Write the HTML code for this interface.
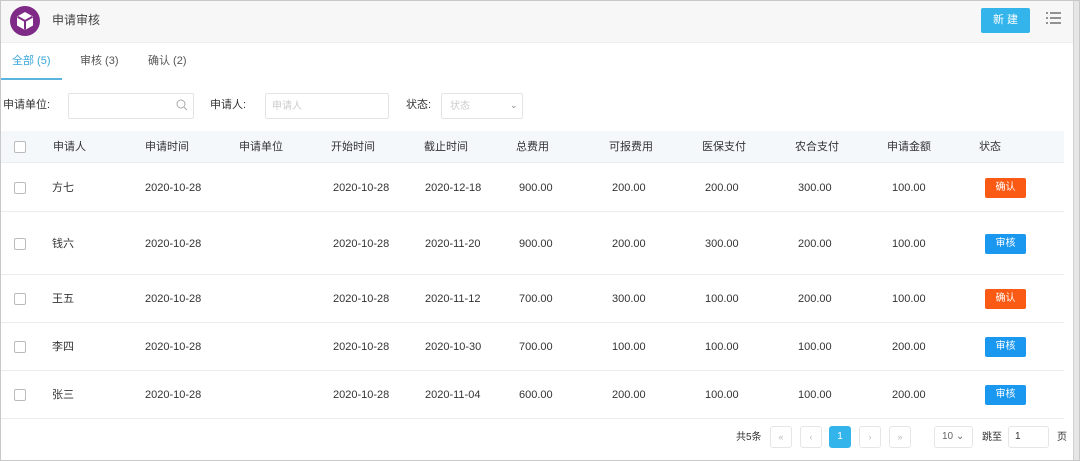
<!DOCTYPE html><html><head><meta charset="utf-8"><style>
*{box-sizing:border-box;margin:0;padding:0}
body{width:1080px;height:461px;background:#fff;font-family:"Liberation Sans","Noto Sans CJK SC",sans-serif;font-size:11px;color:#333;position:relative;overflow:hidden}
.a{position:absolute;white-space:nowrap;line-height:14px;height:14px}
.frame{position:absolute;left:0;top:0;width:1080px;height:461px;border:1px solid #c8c8c8;pointer-events:none}
.hd{position:absolute;left:0;top:0;width:1073px;height:43px;background:#f7f7f7;border-bottom:1px solid #eee}
.sb{position:absolute;left:1073px;top:0;width:7px;height:461px;background:#e6e6e6;border-left:1px solid #d0d0d0}
.inp{position:absolute;height:26px;border:1px solid #e4e4e4;border-radius:2px;background:#fff}
.th{position:absolute;left:0;top:131px;width:1064px;height:32px;background:#f4f8fb;border-bottom:1px solid #e8eef2}
.row{position:absolute;left:0;width:1064px;border-bottom:1px solid #ececec}
.cb{position:absolute;left:14px;width:12px;height:12px;border:1px solid #bbb;border-radius:2px;background:#fff}
.btn{position:absolute;left:985px;width:41px;height:20px;border-radius:2px;color:#fff;font-size:10px;text-align:center;line-height:20px}
.pg{position:absolute;top:426px;width:22px;height:22px;border:1px solid #e6e6e6;border-radius:3px;color:#bbb;font-size:9px;text-align:center;line-height:20px}
</style></head><body>
<div class="hd"></div>
<svg class="a" style="left:10px;top:6px;height:30px" width="30" height="30" viewBox="0 0 30 30"><circle cx="15" cy="15" r="15" fill="#7e2a86"/><path d="M15 6 L23 10.5 L23 19.5 L15 24 L7 19.5 L7 10.5 Z" fill="#fff"/><path d="M7.5 10.8 L15 15 L22.5 10.8 M15 15 L15 23.5" stroke="#7e2a86" stroke-width="2" fill="none"/></svg>
<div class="a" style="left:52px;top:13px;font-size:12px;color:#444">申请审核</div>
<div class="a" style="left:981px;top:8px;width:49px;height:25px;background:#33b5ec;border-radius:2px;color:#fff;font-size:11px;text-align:center;line-height:25px">新 建</div>
<svg class="a" style="left:1046px;top:12px;height:12px" width="15" height="12" viewBox="0 0 15 12"><g stroke="#555" stroke-width="1.3"><path d="M0 1h2M4 1h11M0 6h2M4 6h11M0 11h2M4 11h11"/></g></svg>
<div class="a" style="left:12px;top:54px;color:#3aa6d9">全部 (5)</div>
<div class="a" style="left:0;top:78px;width:62px;height:2px;background:#5ab4dd"></div>
<div class="a" style="left:80px;top:54px;color:#555">审核 (3)</div>
<div class="a" style="left:148px;top:54px;color:#555">确认 (2)</div>
<div class="a" style="left:3px;top:98px">申请单位:</div>
<div class="inp" style="left:68px;top:93px;width:126px"></div>
<svg class="a" style="left:176px;top:99px;height:12px" width="12" height="12" viewBox="0 0 12 12"><circle cx="5" cy="5" r="4" stroke="#aaa" fill="none"/><path d="M8 8l3 3" stroke="#aaa"/></svg>
<div class="a" style="left:210px;top:98px">申请人:</div>
<div class="inp" style="left:265px;top:93px;width:124px"></div>
<div class="a" style="left:272px;top:100px;color:#ccc;font-size:10px">申请人</div>
<div class="a" style="left:406px;top:98px">状态:</div>
<div class="inp" style="left:441px;top:93px;width:82px"></div>
<div class="a" style="left:450px;top:100px;color:#ccc;font-size:10px">状态</div>
<div class="a" style="left:510px;top:98px;color:#888;font-size:9px">⌄</div>
<div class="th"></div>
<div class="cb" style="top:141px"></div>
<div class="a" style="top:140px;left:53px">申请人</div><div class="a" style="top:140px;left:145px">申请时间</div><div class="a" style="top:140px;left:239px">申请单位</div><div class="a" style="top:140px;left:331px">开始时间</div><div class="a" style="top:140px;left:424px">截止时间</div><div class="a" style="top:140px;left:516px">总费用</div><div class="a" style="top:140px;left:609px">可报费用</div><div class="a" style="top:140px;left:702px">医保支付</div><div class="a" style="top:140px;left:795px">农合支付</div><div class="a" style="top:140px;left:887px">申请金额</div><div class="a" style="top:140px;left:979px">状态</div>
<div class="row" style="top:163px;height:49px"></div>
<div class="row" style="top:212px;height:63px"></div>
<div class="row" style="top:275px;height:48px"></div>
<div class="row" style="top:323px;height:48px"></div>
<div class="row" style="top:371px;height:48px"></div>
<div id="rows"></div>
<script>
var d=[[188,"方七","2020-12-18","900.00","200.00","200.00","300.00","100.00",0],
[244,"钱六","2020-11-20","900.00","200.00","300.00","200.00","100.00",1],
[299,"王五","2020-11-12","700.00","300.00","100.00","200.00","100.00",0],
[347,"李四","2020-10-30","700.00","100.00","100.00","100.00","200.00",1],
[395,"张三","2020-11-04","600.00","200.00","100.00","100.00","200.00",1]];
var h="";d.forEach(function(r){var t=r[0]-7;
h+='<div class="cb" style="top:'+(r[0]-6)+'px"></div>';
h+='<div class="a" style="top:'+t+'px;left:52px">'+r[1]+'</div>';
h+='<div class="a" style="top:'+t+'px;left:145px">2020-10-28</div>';
h+='<div class="a" style="top:'+t+'px;left:333px">2020-10-28</div>';
h+='<div class="a" style="top:'+t+'px;left:425px">'+r[2]+'</div>';
[[519,3],[612,4],[705,5],[798,6],[892,7]].forEach(function(c){h+='<div class="a" style="top:'+t+'px;left:'+c[0]+'px">'+r[c[1]]+'</div>';});
h+='<div class="btn" style="top:'+(r[0]-10)+'px;background:'+(r[8]?'#1a97ef':'#fa5a14')+'">'+(r[8]?'审核':'确认')+'</div>';});
document.getElementById('rows').innerHTML=h;
</script>
<div class="a" style="left:736px;top:431px;font-size:10px">共5条</div>
<div class="pg" style="left:770px">«</div><div class="pg" style="left:800px">‹</div>
<div class="pg" style="left:829px;background:#33b5ec;border-color:#33b5ec;color:#fff;font-size:10px">1</div>
<div class="pg" style="left:859px">›</div><div class="pg" style="left:889px">»</div>
<div class="a" style="left:934px;top:426px;width:39px;height:22px;border:1px solid #e6e6e6;border-radius:3px;font-size:10px;color:#666;line-height:20px;padding-left:7px">10 ⌄</div>
<div class="a" style="left:982px;top:431px;font-size:10px">跳至</div>
<div class="a" style="left:1008px;top:426px;width:41px;height:22px;border:1px solid #e6e6e6;border-radius:3px;font-size:10px;line-height:20px;padding-left:6px">1</div>
<div class="a" style="left:1057px;top:431px;font-size:10px">页</div>
<div class="sb"></div>
<div class="frame"></div>
</body></html>
